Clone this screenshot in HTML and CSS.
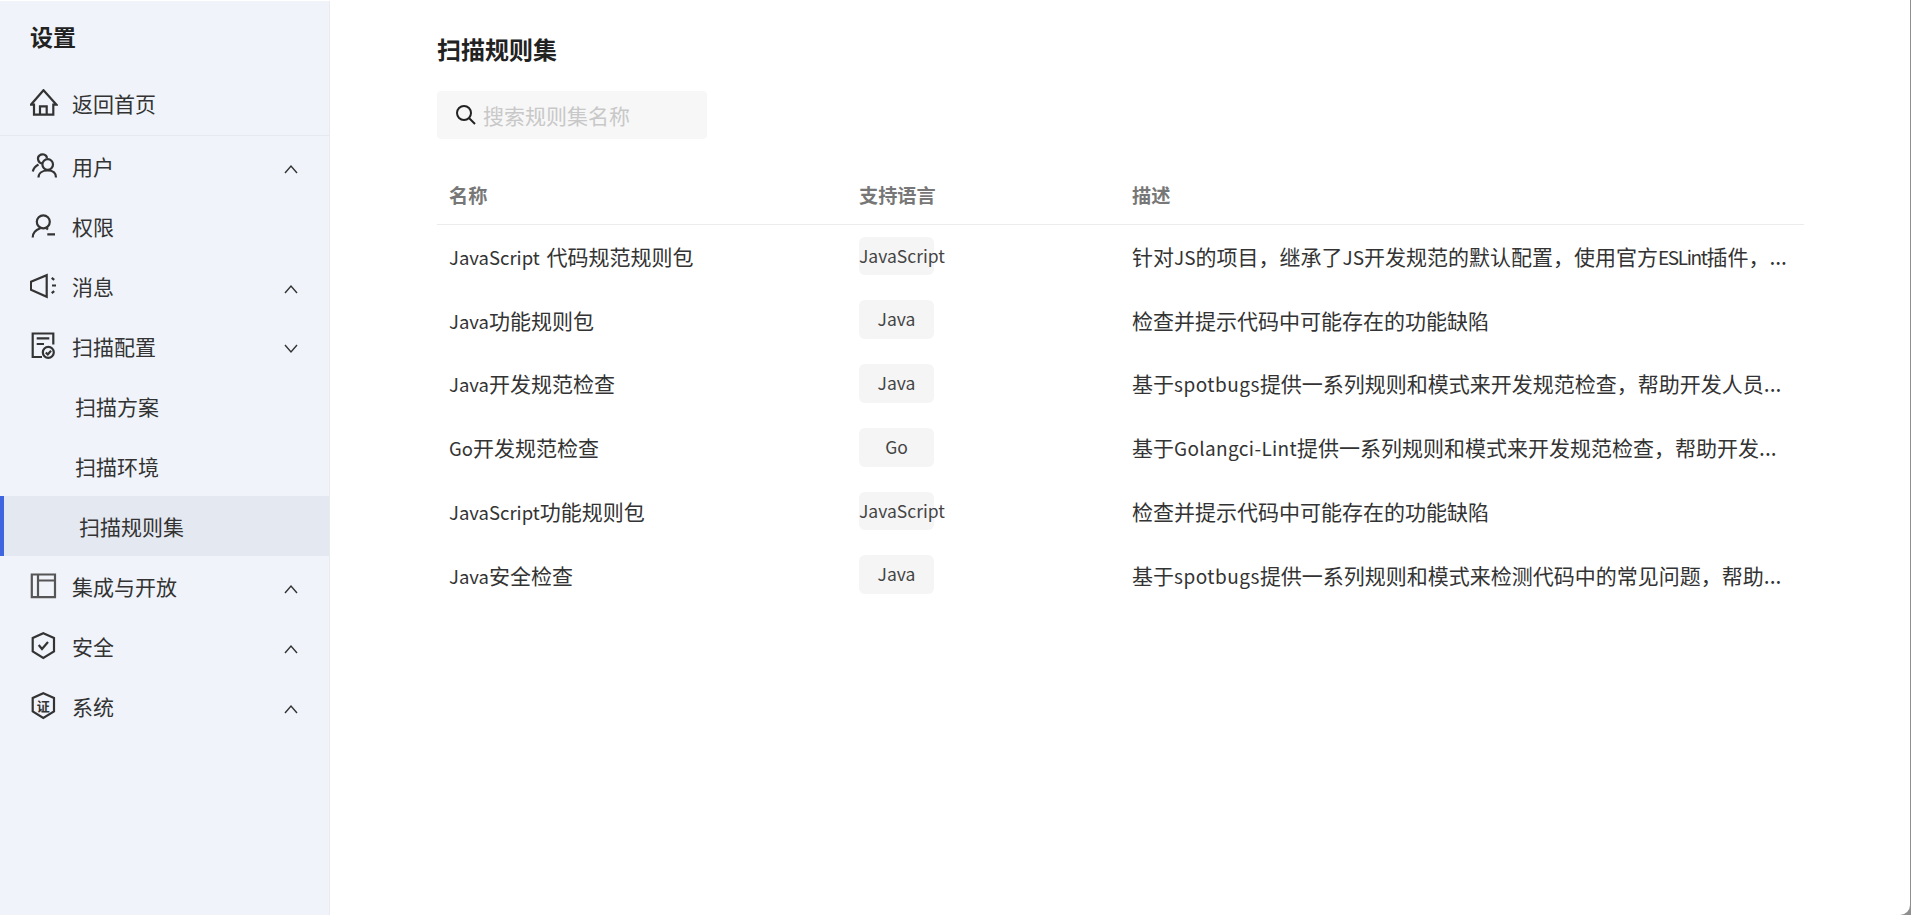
FILE: index.html
```html
<!DOCTYPE html>
<html lang="zh-CN">
<head>
<meta charset="utf-8">
<title>扫描规则集</title>
<link rel="stylesheet" href="styles.css">
</head>
<body>
<div class="window">
  <aside class="sidebar">
    <h2 class="side-title">设置</h2>
    <div class="home-row">
      <a class="nav-item">
        <svg class="nav-icon" viewBox="0 0 28 28"><path d="M4 25.7V15.7H.9L13.500 1.200 26.500 15.700H23.300V25.700ZM10 25.700V17.300H16.700V25.700"/></svg>
        <span>返回首页</span>
      </a>
    </div>
    <nav class="menu">
      <a class="nav-item">
        <svg class="nav-icon" viewBox="0 0 28 28"><circle cx="17.700" cy="12.500" r="5.300"/><path d="M8.500 25.500C8.500 21 12.500 18.500 17.700 18.500S26 21 26 25.500M12 11.500C7.500 10.500 7 5 9.500 3.500 12 1.200 16.500 2.500 17 6M8.500 12.500C5.500 14 3.500 16.500 2.800 19.500"/></svg>
        <span class="nav-label">用户</span>
        <svg class="chev" viewBox="0 0 14 10"><path d="M1 9 7 2l6 7"/></svg>
      </a>
      <a class="nav-item">
        <svg class="nav-icon" viewBox="0 0 28 28"><circle cx="13.300" cy="9.800" r="6.500"/><path d="M2.700 25.500C2.700 21 6 17.800 10.300 16.300M16.500 16.300 18 17.500M17.300 22.300H25"/></svg>
        <span class="nav-label">权限</span>
      </a>
      <a class="nav-item">
        <svg class="nav-icon" viewBox="0 0 28 28"><path d="M.9 9.800 16.700 3.200V24.700L.9 17.800ZM21.700 5.800 24.200 7.800M22 13.500H26M21.700 21.200 24.200 19.200"/></svg>
        <span class="nav-label">消息</span>
        <svg class="chev" viewBox="0 0 14 10"><path d="M1 9 7 2l6 7"/></svg>
      </a>
      <a class="nav-item">
        <svg class="nav-icon" viewBox="0 0 28 28"><path d="M23.300 12.500V1.500H2.700V25H12M6.700 6.300H19.300M6.700 12H14"/><circle cx="18.300" cy="20.300" r="5.500"/><path d="M15.800 20.500 17.800 22.500 21 18.800"/></svg>
        <span class="nav-label">扫描配置</span>
        <svg class="chev" viewBox="0 0 14 10"><path d="M1 1 7 8l6-7"/></svg>
      </a>
      <a class="nav-item sub">扫描方案</a>
      <a class="nav-item sub">扫描环境</a>
      <a class="nav-item sub active">扫描规则集</a>
      <a class="nav-item">
        <svg class="nav-icon soft" viewBox="0 0 28 28"><path d="M1.800 2.500H25V25.200H1.800ZM8 2.500V25.200M8 8.500H25"/></svg>
        <span class="nav-label">集成与开放</span>
        <svg class="chev" viewBox="0 0 14 10"><path d="M1 9 7 2l6 7"/></svg>
      </a>
      <a class="nav-item">
        <svg class="nav-icon" viewBox="0 0 28 28"><path d="M13.300 1.200 24 6V19.500L13.300 26 2.700 19.500V6ZM8.700 13 12 17 18 10"/></svg>
        <span class="nav-label">安全</span>
        <svg class="chev" viewBox="0 0 14 10"><path d="M1 9 7 2l6 7"/></svg>
      </a>
      <a class="nav-item">
        <svg class="nav-icon" viewBox="0 0 28 28"><path d="M13.300 1.200 24 6V19.500L13.300 26 2.700 19.500V6Z"/><text class="badge-text" x="13.300" y="18.500">证</text></svg>
        <span class="nav-label">系统</span>
        <svg class="chev" viewBox="0 0 14 10"><path d="M1 9 7 2l6 7"/></svg>
      </a>
    </nav>
  </aside>
  <main class="content">
    <h1 class="page-title">扫描规则集</h1>
    <div class="search">
      <svg class="search-icon" viewBox="0 0 22 22"><circle cx="9" cy="9" r="7"/><path d="M14 14 20 20"/></svg>
      <span class="placeholder">搜索规则集名称</span>
    </div>
    <div class="table">
      <div class="thead">
        <div class="name">名称</div>
        <div>支持语言</div>
        <div>描述</div>
      </div>
      <div class="trow">
        <div class="name"><span class="lat">JavaScript</span> 代码规范规则包</div>
        <div><span class="tag">JavaScript</span></div>
        <div>针对<span class="lat">JS</span>的项目，继承了<span class="lat">JS</span>开发规范的默认配置，使用官方<span class="lat narrow">ESLint</span>插件，...</div>
      </div>
      <div class="trow">
        <div class="name"><span class="lat">Java</span>功能规则包</div>
        <div><span class="tag">Java</span></div>
        <div>检查并提示代码中可能存在的功能缺陷</div>
      </div>
      <div class="trow">
        <div class="name"><span class="lat">Java</span>开发规范检查</div>
        <div><span class="tag">Java</span></div>
        <div>基于<span class="lat wide">spotbugs</span>提供一系列规则和模式来开发规范检查，帮助开发人员...</div>
      </div>
      <div class="trow">
        <div class="name"><span class="lat">Go</span>开发规范检查</div>
        <div><span class="tag">Go</span></div>
        <div>基于<span class="lat wide-long">Golangci-Lint</span>提供一系列规则和模式来开发规范检查，帮助开发...</div>
      </div>
      <div class="trow">
        <div class="name"><span class="lat">JavaScript</span>功能规则包</div>
        <div><span class="tag">JavaScript</span></div>
        <div>检查并提示代码中可能存在的功能缺陷</div>
      </div>
      <div class="trow">
        <div class="name"><span class="lat">Java</span>安全检查</div>
        <div><span class="tag">Java</span></div>
        <div>基于<span class="lat wide">spotbugs</span>提供一系列规则和模式来检测代码中的常见问题，帮助...</div>
      </div>
    </div>
  </main>
</div>
</body>
</html>
```

FILE: styles.css
```css
* { box-sizing: border-box; }
html, body { margin: 0; height: 100%; background: #8f8f8f; overflow: hidden; }
body {
  font-family: "Noto Sans CJK SC", "Noto Sans", sans-serif;
  color: #333;
}
.window {
  display: flex;
  height: 915px;
  width: 1910px;
  background: #fff;
  border-bottom-right-radius: 10px;
  overflow: hidden;
  padding-top: 1px;
}
.sidebar {
  flex: 0 0 330px;
  background: #f0f3fa;
  border-right: 1px solid #eaeaee;
}
.side-title {
  margin: 0;
  height: 72px;
  padding: 19px 0 0 30px;
  font-size: 23px;
  line-height: 32px;
  font-weight: 700;
  color: #222;
}
.home-row { height: 63px; border-bottom: 1px solid #e6e9f0; }
.menu { display: flex; flex-direction: column; }
.nav-item {
  display: flex;
  align-items: center;
  height: 60px;
  padding-left: 30px;
  font-size: 21px;
  color: #333;
}
.nav-icon {
  width: 28px;
  height: 28px;
  margin-right: 14px;
  flex: none;
  fill: none;
  stroke: #333;
  stroke-width: 2.2;
}
.nav-icon.soft { stroke: #555; }
.badge-text {
  font-size: 13px;
  font-weight: 700;
  fill: #333;
  stroke: none;
  text-anchor: middle;
}
.nav-label { flex: 1; }
.chev {
  width: 14px;
  height: 10px;
  margin: 6px 31px 0 0;
  fill: none;
  stroke: #333;
  stroke-width: 1.4;
}
.nav-item.sub { padding-left: 75px; }
.nav-item.active {
  padding-left: 75px;
  background: #e4e8f0;
  border-left: 4px solid #3f66e0;
}
.content {
  flex: 1;
  padding: 0 106px 0 107px;
  min-width: 0;
}
.page-title {
  margin: 0;
  padding-top: 31px;
  height: 90px;
  font-size: 24px;
  line-height: 34px;
  font-weight: 700;
  color: #222;
}
.search {
  display: flex;
  align-items: center;
  width: 270px;
  height: 48px;
  padding-left: 18px;
  background: #f7f7f7;
  border-radius: 4px;
}
.search-icon {
  width: 22px;
  height: 22px;
  margin-right: 6px;
  fill: none;
  stroke: #222;
  stroke-width: 2;
}
.placeholder { font-size: 21px; color: #c8c8c8; }
.table { margin-top: 27px; }
.thead, .trow {
  display: grid;
  grid-template-columns: 422px 273px 1fr;
  align-items: center;
}
.thead {
  height: 59px;
  margin-bottom: -1px;
  border-bottom: 1px solid #ececec;
  font-size: 19.2px;
  font-weight: 700;
  color: #777;
}
.trow { height: 63.75px; font-size: 21px; color: #333; white-space: nowrap; }
.name { padding-left: 12px; word-spacing: 2px; }
.name .lat { font-size: 18.500px; }
.lat { font-size: 19px; }
.narrow { letter-spacing: -1.4px; }
.wide { letter-spacing: .5px; }
.wide-long { letter-spacing: .35px; }
.tag {
  display: block;
  width: 75px;
  height: 38.750px;
  line-height: 38.750px;
  font-size: 17.500px;
  text-align: center;
  background: #f5f5f5;
  border-radius: 6px;
  color: #444;
}
```
